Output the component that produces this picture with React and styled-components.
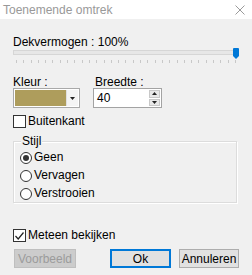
import React from 'react'
import styled, { createGlobalStyle } from 'styled-components'

const Global = createGlobalStyle`
  html, body { margin: 0; padding: 0; background: #f0f0f0; }
  body {
    font-family: "Liberation Sans Narrow", "Liberation Sans", sans-serif;
    font-size: 12px;
    color: #000;
  }
`

const Window = styled.div`
  width: 252px;
  height: 275px;
  background: #f0f0f0;
  display: flex;
  flex-direction: column;
  overflow: hidden;
`

const TitleBar = styled.div`
  height: 19px;
  flex: none;
  box-sizing: border-box;
  background: #fff;
  display: flex;
  align-items: center;
  justify-content: space-between;
  padding: 0 7px 0 3px;
  color: #999;
  font-size: 12px;
`

const Body = styled.div`
  display: flex;
  flex-direction: column;
  padding: 16px 15px 0 13px;
`

const Label = styled.div`
  line-height: 14px;
  height: ${p => p.$h || 14}px;
  padding-left: ${p => p.$pl || 0}px;
  white-space: nowrap;
`

const SliderWrap = styled.div`
  position: relative;
  margin-top: 1px;
`

const Track = styled.div`
  height: 3px;
  background: #e7e7e7;
  border: 1px solid #d6d6d6;
`

const Thumb = styled.svg`
  position: absolute;
  right: -2px;
  top: -2px;
`

const Ticks = styled.div`
  display: flex;
  justify-content: space-between;
  margin: 5px 1px 0 3px;
  height: 3px;
`

const Tick = styled.span`
  width: 1px;
  height: 3px;
  background: #c8c8c8;
`

const FieldRow = styled.div`
  display: flex;
  gap: 13px;
  margin-top: 12px;
`

const Field = styled.div`
  display: flex;
  flex-direction: column;
`

const Combo = styled.div`
  width: 67px;
  height: 20px;
  box-sizing: border-box;
  border: 1px solid #a9a9a9;
  background: #fff;
  display: flex;
  padding: 1px;
`

const Swatch = styled.div`
  flex: 1;
  background: #ae9d5c;
`

const DropBtn = styled.div`
  width: 11px;
  display: flex;
  align-items: center;
  justify-content: center;
  background: #f4f4f4;
  border-left: 1px solid #e0e0e0;
`

const SpinBox = styled.div`
  width: 69px;
  height: 20px;
  box-sizing: border-box;
  border: 1px solid #a3a3a3;
  background: #fff;
  display: flex;
  align-items: center;
  padding-left: 3px;
`

const SpinValue = styled.span`
  flex: 1;
`

const SpinButtons = styled.div`
  display: flex;
  flex-direction: column;
  gap: 1px;
  padding: 1px;
  align-self: stretch;
`

const SpinBtn = styled.div`
  width: 11px;
  flex: 1;
  background: #e8e8e8;
  border: 1px solid #c8c8c8;
  box-sizing: border-box;
  display: flex;
  align-items: center;
  justify-content: center;
`

const CheckRow = styled.label`
  display: flex;
  align-items: center;
  gap: 2px;
  margin-top: ${p => p.$top}px;
  height: 13px;
  line-height: 13px;
`

const Box = styled.span`
  width: 11px;
  height: 11px;
  flex: none;
  border: 1px solid #333;
  background: #fff;
  display: flex;
  align-items: center;
  justify-content: center;
`

const Group = styled.div`
  position: relative;
  margin-top: 13px;
  padding: 9px 0 2px 6px;
  border: 1px solid #dcdcdc;
  box-shadow: inset 1px 1px 0 #fff, 1px 1px 0 #fff;
  display: flex;
  flex-direction: column;
  gap: 5px;
`

const Legend = styled.span`
  position: absolute;
  top: -8px;
  left: 7px;
  padding: 0 1px;
  line-height: 14px;
  background: #f0f0f0;
`

const RadioRow = styled.label`
  display: flex;
  align-items: center;
  gap: 2px;
  height: 13px;
  line-height: 13px;
`

const Circle = styled.span`
  width: 10px;
  height: 10px;
  flex: none;
  border: 1px solid #333;
  border-radius: 50%;
  background: #fff;
  display: flex;
  align-items: center;
  justify-content: center;
`

const Dot = styled.span`
  width: 6px;
  height: 6px;
  border-radius: 50%;
  background: #333;
`

const Buttons = styled.div`
  display: flex;
  margin-top: 7px;
  align-items: center;
`

const Button = styled.div`
  width: ${p => p.$w}px;
  height: 19px;
  flex: none;
  box-sizing: border-box;
  display: flex;
  align-items: center;
  justify-content: center;
  margin-left: ${p => p.$ml || 0}px;
  background: ${p => (p.$disabled ? '#cccccc' : '#e1e1e1')};
  color: ${p => (p.$disabled ? '#9b9b9b' : '#000')};
  border: ${p =>
    p.$default ? '2px solid #0078d7' : p.$disabled ? '1px solid #bfbfbf' : '1px solid #adadad'};
`

const Arrow = ({ up }) => (
  <svg width="5" height="3" viewBox="0 0 5 3">
    <path d={up ? 'M0 3 L2.5 0 L5 3 Z' : 'M0 0 L5 0 L2.5 3 Z'} fill="#222" />
  </svg>
)

export default function App() {
  const ticks = Array.from({ length: 31 })
  return (
    <Window>
      <Global />
      <TitleBar>
        <span>Toenemende omtrek</span>
        <svg width="10" height="10" viewBox="0 0 10 10">
          <path d="M0.5 0.5 L9.5 9.5 M9.5 0.5 L0.5 9.5" stroke="#9a9a9a" strokeWidth="1" />
        </svg>
      </TitleBar>
      <Body>
        <Label>Dekvermogen : 100%</Label>
        <SliderWrap>
          <Track />
          <Thumb width="6" height="11" viewBox="0 0 6 11">
            <path d="M0 1 Q0 0 1 0 L5 0 Q6 0 6 1 L6 8 L3 11 L0 8 Z" fill="#0078d7" />
          </Thumb>
          <Ticks>
            {ticks.map((_, i) => (
              <Tick key={i} />
            ))}
          </Ticks>
        </SliderWrap>
        <FieldRow>
          <Field>
            <Label $h={13}>Kleur :</Label>
            <Combo>
              <Swatch />
              <DropBtn>
                <Arrow />
              </DropBtn>
            </Combo>
          </Field>
          <Field>
            <Label $h={13} $pl={2}>Breedte :</Label>
            <SpinBox>
              <SpinValue>40</SpinValue>
              <SpinButtons>
                <SpinBtn>
                  <Arrow up />
                </SpinBtn>
                <SpinBtn>
                  <Arrow />
                </SpinBtn>
              </SpinButtons>
            </SpinBox>
          </Field>
        </FieldRow>
        <CheckRow $top={7}>
          <Box />
          <span>Buitenkant</span>
        </CheckRow>
        <Group>
          <Legend>Stijl</Legend>
          <RadioRow>
            <Circle>
              <Dot />
            </Circle>
            <span>Geen</span>
          </RadioRow>
          <RadioRow>
            <Circle />
            <span>Vervagen</span>
          </RadioRow>
          <RadioRow>
            <Circle />
            <span>Verstrooien</span>
          </RadioRow>
        </Group>
        <CheckRow $top={26}>
          <Box>
            <svg width="9" height="8" viewBox="0 0 9 8">
              <path d="M0.5 4 L3.2 7 L8.5 0.5" stroke="#222" strokeWidth="1.2" fill="none" />
            </svg>
          </Box>
          <span>Meteen bekijken</span>
        </CheckRow>
        <Buttons>
          <Button $w={62} $ml={1} $disabled>Voorbeeld</Button>
          <Button $w={61} $ml={34} $default>Ok</Button>
          <Button $w={60} $ml={8}>Annuleren</Button>
        </Buttons>
      </Body>
    </Window>
  )
}
